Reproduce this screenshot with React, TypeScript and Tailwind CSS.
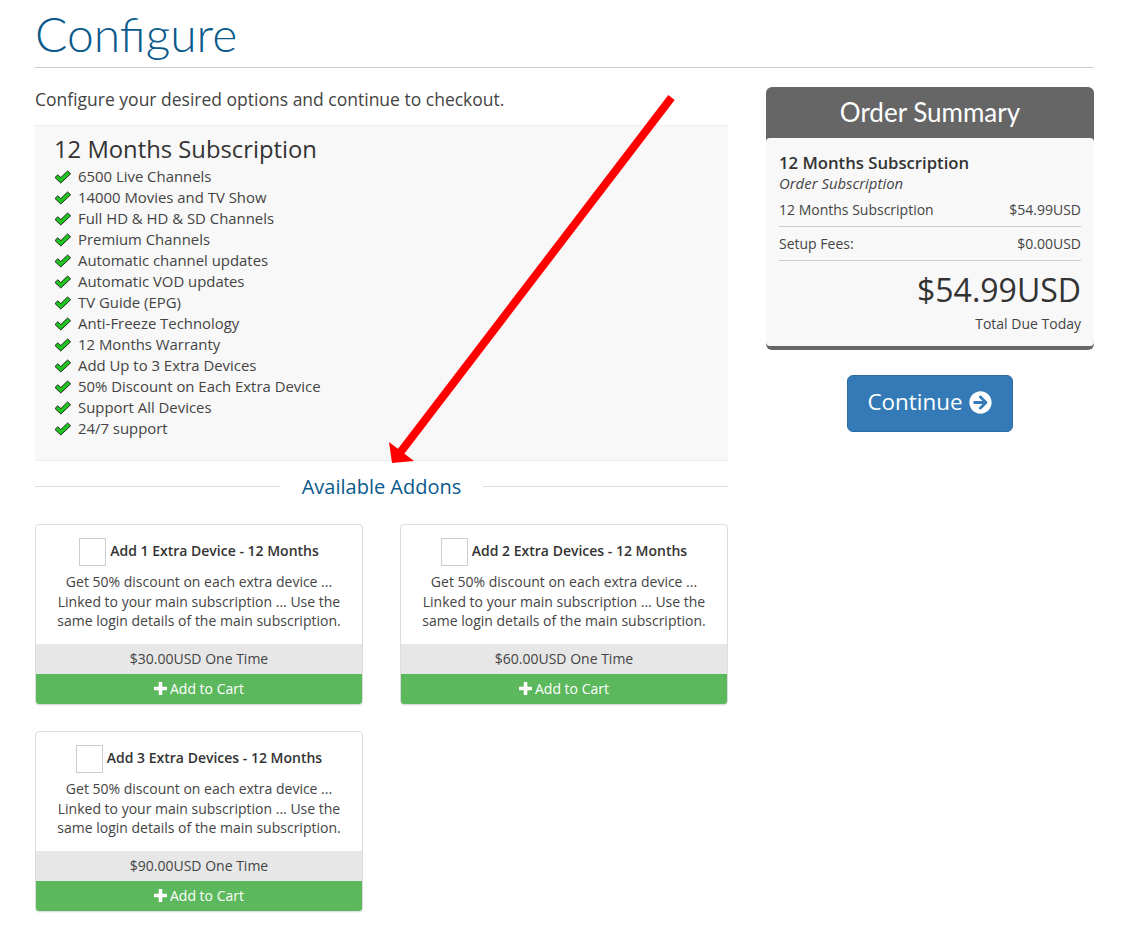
import React from "react";
import { FaArrowCircleRight } from "react-icons/fa";

const features = [
  "6500 Live Channels",
  "14000 Movies and TV Show",
  "Full HD & HD & SD Channels",
  "Premium Channels",
  "Automatic channel updates",
  "Automatic VOD updates",
  "TV Guide (EPG)",
  "Anti-Freeze Technology",
  "12 Months Warranty",
  "Add Up to 3 Extra Devices",
  "50% Discount on Each Extra Device",
  "Support All Devices",
  "24/7 support",
];

const addons = [
  { name: "Add 1 Extra Device - 12 Months", price: "$30.00USD One Time" },
  { name: "Add 2 Extra Devices - 12 Months", price: "$60.00USD One Time" },
  { name: "Add 3 Extra Devices - 12 Months", price: "$90.00USD One Time" },
];

function CheckIcon() {
  return (
    <svg className="mr-[6px] shrink-0" width="18" height="14" viewBox="0 0 18 14">
      <polygon points="1,7.5 3.8,4.8 6.8,7.6 13.6,1 16.6,3.8 6.8,13" fill="#1fc41f" stroke="#1c2a1e" strokeWidth="1" />
    </svg>
  );
}

function PlusIcon() {
  return (
    <svg className="shrink-0" width="13" height="13" viewBox="0 0 13 13">
      <polygon points="4.7,0 8.3,0 8.3,4.7 13,4.7 13,8.3 8.3,8.3 8.3,13 4.7,13 4.7,8.3 0,8.3 0,4.7 4.7,4.7" fill="#fff" />
    </svg>
  );
}

function AddonCard({ name, price }: { name: string; price: string }) {
  return (
    <div className="h-[181px] rounded-[4px] border border-[#ddd] bg-white shadow-[0_1px_1px_rgba(0,0,0,0.05)] overflow-hidden flex flex-col">
      <div className="flex-1 px-[15px] pt-[13px] text-center">
        <div className="flex items-center justify-center gap-1 h-[28px]">
          <span className="w-[27px] h-[28px] border border-[#ccc] bg-white" />
          <span className="text-[14px] leading-[24px] pb-[3px] font-semibold text-[#333]">{name}</span>
        </div>
        <p className="mt-[6px] text-[14px] leading-[19.7px] text-[#444]">
          Get 50% discount on each extra device ... Linked to your main subscription ... Use the same login details of the main subscription.
        </p>
      </div>
      <div className="h-[30px] pb-[2px] bg-[#e7e7e7] flex items-center justify-center text-[14px] text-[#444]">{price}</div>
      <div className="h-[30px] pb-[2px] bg-[#5cb85c] flex items-center justify-center gap-[3px] text-[14px] text-white">
        <PlusIcon />
        Add to Cart
      </div>
    </div>
  );
}

export default function App() {
  return (
    <div className="relative min-h-[925px] bg-white pl-[35px] pr-[42px] pt-[6px] font-['Open_Sans',sans-serif] text-[#333]">
      <h1 className="h-[62px] border-b border-[#ccc] font-['Lato',sans-serif] font-light text-[48px] leading-[56px] text-[#0a5a8c]">Configure</h1>
      <div className="flex gap-[38px] mt-[19px]">
        <div className="w-[693px]">
          <p className="text-[17.5px] leading-[24px] text-[#444]">Configure your desired options and continue to checkout.</p>
          <div className="mt-[14px] h-[336px] bg-[#f8f8f8] border-y border-[#eee] pl-[19px] pt-[7px]">
            <h2 className="text-[23.8px] leading-[33px] text-[#333]">12 Months Subscription</h2>
            <ul>
              {features.map((f) => (
                <li key={f} className="flex items-center h-[21px] text-[14.9px] text-[#444]">
                  <CheckIcon />
                  {f}
                </li>
              ))}
            </ul>
          </div>
          <div className="flex items-center mt-[12px] h-[26px]">
            <div className="flex-1 border-t border-[#ddd]" />
            <span className="px-[22px] pt-[2px] text-[20px] leading-[28px] text-[#0a5a8c]">Available Addons</span>
            <div className="flex-1 border-t border-[#ddd]" />
          </div>
          <div className="grid grid-cols-2 gap-x-[37px] gap-y-[26px] mt-[25px]">
            {addons.map((a) => (
              <AddonCard key={a.name} name={a.name} price={a.price} />
            ))}
          </div>
        </div>
        <div className="w-[328px]">
          <div className="rounded-[6px] bg-[#666] overflow-hidden pb-[4px]">
            <div className="h-[51px] flex items-center justify-center font-['Lato',sans-serif] text-[26px] text-white">Order Summary</div>
            <div className="h-[208px] rounded-[4px] bg-[#f8f8f8] px-[13px] pt-[14px]">
              <div className="text-[16.7px] leading-[22px] font-semibold text-[#333]">12 Months Subscription</div>
              <div className="text-[14.9px] leading-[19px] italic text-[#444]">Order Subscription</div>
              <div className="flex justify-between h-[34px] pt-[7px] leading-[20px] border-b border-[#ccc] text-[14px] text-[#444]">
                <span>12 Months Subscription</span><span>$54.99USD</span>
              </div>
              <div className="flex justify-between h-[34px] pt-[7px] leading-[20px] border-b border-[#ccc] text-[14px] text-[#444]">
                <span>Setup Fees:</span><span>$0.00USD</span>
              </div>
              <div className="mt-[7px] text-right text-[32px] leading-[44px] text-[#333]">$54.99USD</div>
              <div className="mt-[2px] text-right text-[14px] leading-[20px] text-[#444]">Total Due Today</div>
            </div>
          </div>
          <div className="flex justify-center mt-[25px]">
            <div className="w-[166px] h-[57px] pb-[3px] rounded-[6px] bg-[#337ab7] border border-[#2e6da4] flex items-center justify-center gap-[7px] text-[22.4px] text-white">
              Continue
              <FaArrowCircleRight className="text-[23px] mt-[1px]" />
            </div>
          </div>
        </div>
      </div>
      {/* red annotation arrow drawn over the page */}
      <svg className="absolute left-[380px] top-[90px]" width="300" height="380" viewBox="0 0 300 380">
        <line x1="291.5" y1="7.5" x2="16" y2="368" stroke="#ff0000" strokeWidth="8" />
        <polygon points="9,352 12,373 34,371" fill="#ff0000" />
      </svg>
    </div>
  );
}
